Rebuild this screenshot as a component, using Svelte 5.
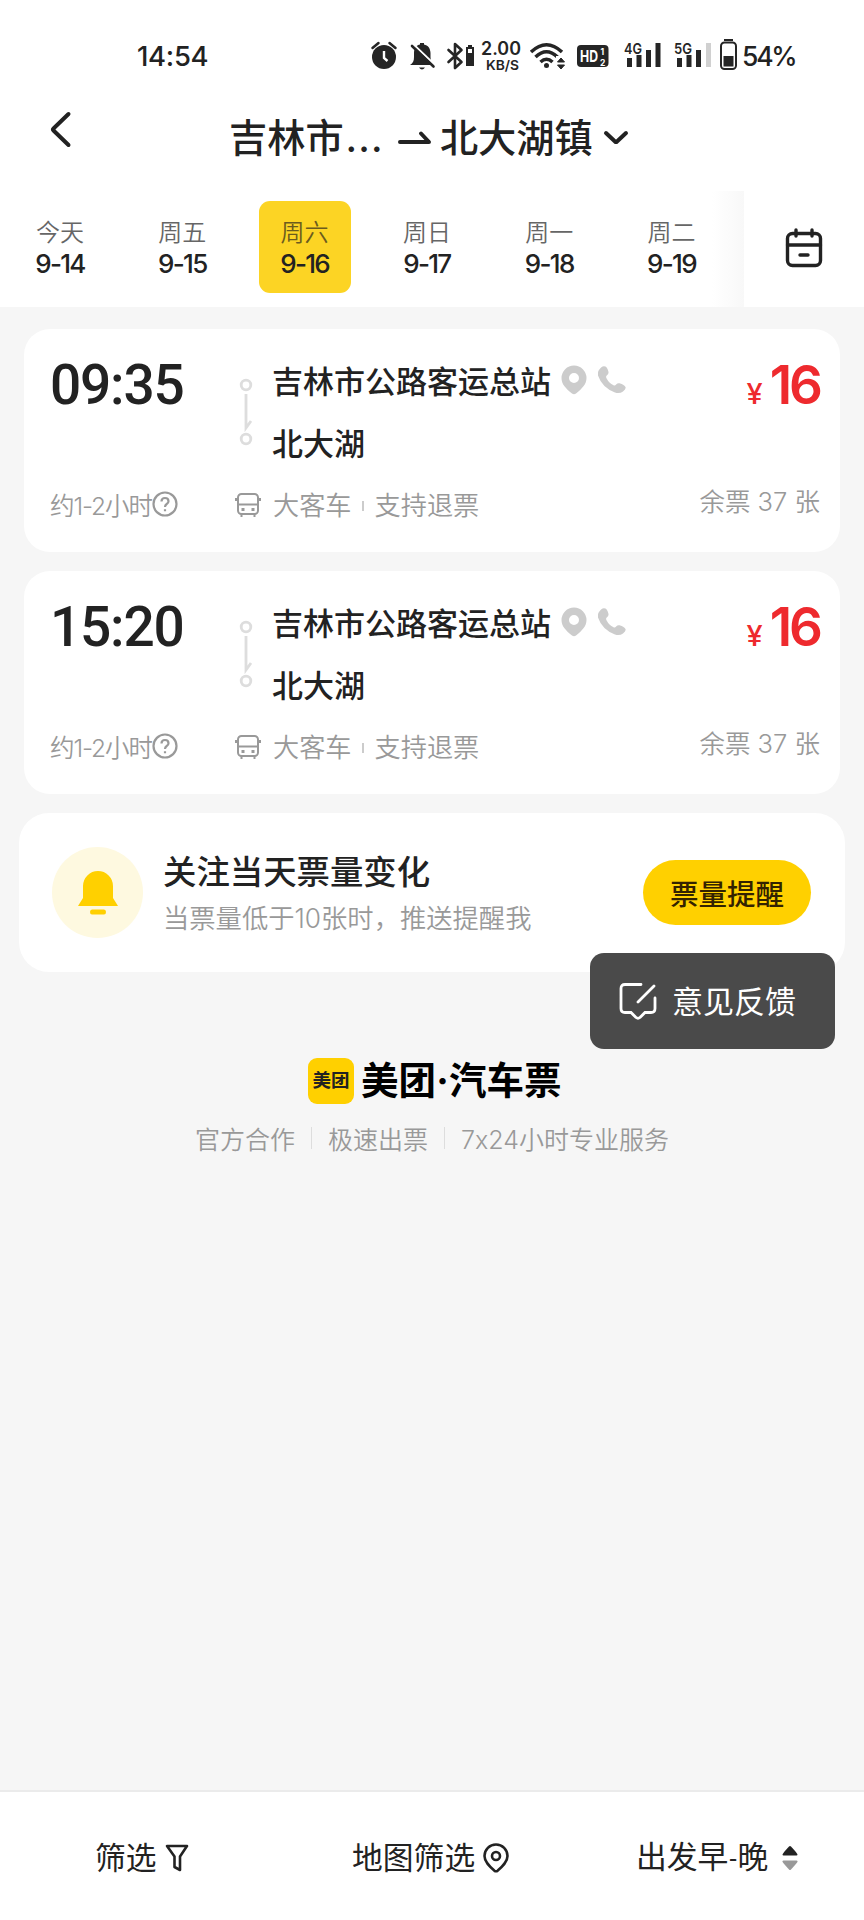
<script>
    let days = [
        { week: '今天', date: '9-14' },
        { week: '周五', date: '9-15' },
        { week: '周六', date: '9-16' },
        { week: '周日', date: '9-17' },
        { week: '周一', date: '9-18' },
        { week: '周二', date: '9-19' }
    ];
    let selected = '9-16';

    let trips = [
        { time: '09:35', from: '吉林市公路客运总站', to: '北大湖', price: 16, left: 37 },
        { time: '15:20', from: '吉林市公路客运总站', to: '北大湖', price: 16, left: 37 }
    ];
</script>

<div class="page">
    <header>
        <!-- Status bar -->
        <div class="status">
            <span class="clock">14:54</span>
            <svg class="status-icons" width="372" height="40" viewBox="370 36 372 40" fill="#252525">
                <!-- alarm -->
                <circle cx="384" cy="57" r="12" />
                <path d="M372.500 48l6-5M395.500 48l-6-5" stroke="#252525" stroke-width="2.500" stroke-linecap="round" />
                <path d="M384 51v7l3.500 3" fill="none" stroke="#fff" stroke-width="2.400" />
                <!-- muted bell -->
                <path d="M410 65c3-2 4-4 4-8v-4c0-5 3-8 6-8.500v-1.500h4v1.500c4 .8 6.500 4 6.500 8.500v4c0 4 1 6 4 8zM419 67.500h6q-3 4-6 0z" />
                <path d="M413.500 44.500l22 21" stroke="#fff" stroke-width="2.200" />
                <path d="M412 46l21.500 20.500" stroke="#252525" stroke-width="2.600" stroke-linecap="round" />
                <!-- bluetooth -->
                <path d="M448.500 50l13 12-6.500 6V44l6.500 6-13 12" fill="none" stroke="#252525" stroke-width="2.600" stroke-linejoin="round" stroke-linecap="round" />
                <path d="M468 45h4v2h2v19h-8V47h2z" />
                <path d="M468 49h4v4h-4z" fill="#fff" />
                <text x="481" y="54.500" font-size="18.500" font-weight="600" textLength="40" lengthAdjust="spacingAndGlyphs">2.00</text>
                <text x="486" y="69.500" font-size="13.500" font-weight="600" textLength="33" lengthAdjust="spacingAndGlyphs">KB/S</text>
                <!-- wifi -->
                <g fill="none" stroke="#252525" stroke-width="3.500">
                    <path d="M531 52q15.500-14.500 31 0" />
                    <path d="M535.500 57q11-10.500 22 0" />
                    <path d="M540.500 62q6-5.500 12 0" />
                </g>
                <circle cx="546.500" cy="65.500" r="2.500" />
                <path d="M556 56h10v14h-10z" fill="#fff" />
                <path d="M557.500 62l3.500-4 3.500 4zM557.500 65h7l-3.500 4z" stroke="#252525" stroke-width="1" />
                <!-- hd -->
                <rect x="577" y="45" width="31.500" height="22" rx="4" />
                <g fill="#fff" font-weight="700">
                    <text x="580" y="62" font-size="16.500" textLength="18" lengthAdjust="spacingAndGlyphs">HD</text>
                    <text x="600.500" y="54.500" font-size="8.500">1</text>
                    <text x="600" y="65.500" font-size="8.500">2</text>
                </g>
                <!-- signals -->
                <path d="M627 58h5v9h-5zM636.500 55h5v12h-5zM646 50h5v17h-5zM655.500 43h5v24h-5z" />
                <text class="net" x="624" y="53.500" font-size="15" font-weight="600" textLength="18" lengthAdjust="spacingAndGlyphs">4G</text>
                <path d="M677 58h5v9h-5zM686.500 55h5v12h-5zM696 50h5v17h-5z" />
                <path d="M706 43h5v24h-5z" fill="#d0d0d0" />
                <text class="net" x="674" y="53.500" font-size="15" font-weight="600" textLength="18" lengthAdjust="spacingAndGlyphs">5G</text>
                <!-- battery -->
                <path d="M724 39h9v2h-9z" />
                <rect x="721" y="42.500" width="15" height="26.500" rx="3.500" fill="none" stroke="#252525" stroke-width="2" />
                <path d="M723.500 56h10v10.500h-10z" />
            </svg>
            <span class="percent">54%</span>
        </div>

        <div class="title-bar">
            <svg class="back" width="24" height="40" viewBox="0 0 24 40">
                <path d="M19.500 4L4.500 18.500q-1 1 0 2L19.500 35" />
            </svg>
            <div class="route">
                <span>吉林市<i class="dots">...</i></span>
                <svg class="route-arrow" width="34" height="16" viewBox="0 0 34 16">
                    <path d="M2 12h29L23 3.500" />
                </svg>
                <span>北大湖镇</span>
                <svg class="route-more" width="26" height="16" viewBox="0 0 26 16">
                    <path d="M3 3l9 8.500q1 1 2 0L23 3" />
                </svg>
            </div>
        </div>

        <!-- Date picker -->
        <div class="dates">
            <div class="days">
                {#each days as day}
                    <button class="day" class:active={day.date === selected} on:click={() => selected = day.date}>
                        <span class="week">{day.week}</span>
                        <span class="date">{day.date}</span>
                    </button>
                {/each}
            </div>
            <div class="fade"></div>
            <svg class="calendar" width="40" height="42" viewBox="0 0 40 42">
                <rect x="3.500" y="6.500" width="33" height="32" rx="5" />
                <path d="M12 3v6M28 3v6M3.500 18h33M16 28h8" stroke-linecap="round" />
            </svg>
        </div>
    </header>

    <main>
        {#each trips as trip}
            <section class="trip">
                <div class="time">{trip.time}</div>
                <svg class="rail" width="14" height="68" viewBox="0 0 14 68">
                    <circle cx="7" cy="7" r="4.800" />
                    <circle cx="7" cy="61" r="4.800" />
                    <path d="M7 16v34l5-7" />
                </svg>
                <div class="stops">
                    <div class="stop">
                        <span>{trip.from}</span>
                        <svg class="pin" width="26" height="30" viewBox="0 0 26 30">
                            <path fill-rule="evenodd" d="M13 .5a12.500 12.500 0 0 0-12.500 12.500c0 6.500 4.500 10.500 10.500 15.500q2 1.500 4 0c6-5 10.500-9 10.500-15.500A12.500 12.500 0 0 0 13 .5zM13 8a5 5 0 1 1 0 10 5 5 0 0 1 0-10z" />
                        </svg>
                        <svg class="phone" width="28" height="28" viewBox="0 0 28 28">
                            <path d="M1 4q3-5 6.500-3.500 2 1 3 5.500.3 2-1.500 3.200-1.500 1-.5 3 2.500 5 7 7 1.500.8 2.600-.6 1.500-1.800 3.400-1.300 5 1.500 6 3.700.8 2-2.500 4.500-3.500 2.500-8 1Q4 21.500 0 9.500-.5 6 1 4z" />
                        </svg>
                    </div>
                    <div class="stop">{trip.to}</div>
                </div>
                <div class="price"><small>¥</small>{trip.price}</div>

                <div class="duration">
                    <span>约1-2小时</span>
                    <svg width="26" height="26" viewBox="0 0 26 26">
                        <circle cx="13" cy="13" r="11.500" />
                        <path d="M9.500 10.500q0-3.500 3.500-3.500t3.500 3.200q0 1.600-1.800 2.800-1.700 1.200-1.700 3M13 18.300v1.900" />
                    </svg>
                </div>
                <svg class="bus" width="28" height="26" viewBox="0 0 28 26">
                    <rect x="4" y="2" width="20" height="20" rx="3.500" />
                    <path d="M4 12.500h20M2 6v3M26 6v3M2 7h2M24 7h2M7.500 22v3M20.500 22v3" />
                    <path d="M7.500 17.500h3M17.500 17.500h3" stroke-width="3" />
                </svg>
                <div class="tags">
                    <span>大客车</span>
                    <i class="sep"></i>
                    <span>支持退票</span>
                </div>
                <div class="left">余票 {trip.left} 张</div>
            </section>
        {/each}

        <!-- Ticket reminder -->
        <section class="notice">
            <div class="bell">
                <svg width="42" height="46" viewBox="0 0 42 46">
                    <path d="M6 28V16a15 15 0 0 1 30 0v12l5 8H1zM15 39.500h12q2 0 2 2.500t-2 2.500H15q-2 0-2-2.500t2-2.500z" />
                </svg>
            </div>
            <div class="notice-text">
                <h2>关注当天票量变化</h2>
                <p>当票量低于10张时，推送提醒我</p>
            </div>
            <button class="remind">票量提醒</button>
            <button class="feedback">
                <svg width="38" height="38" viewBox="0 0 38 38">
                    <path d="M22 2.500H6Q2 2.500 2 6.500v20q0 4 4 4h6l5 5q2 1.500 4 0l5-5h6q4 0 4-4V16M35 4L19 20" />
                </svg>
                <span>意见反馈</span>
            </button>
        </section>

        <footer>
            <div class="brand">
                <span class="logo">美团</span>
                <span class="name">美团<i>·</i>汽车票</span>
            </div>
            <div class="promises">
                <span>官方合作</span>
                <i></i>
                <span>极速出票</span>
                <i></i>
                <span>7x24小时专业服务</span>
            </div>
        </footer>
    </main>

    <nav>
        <button class="filter">
            筛选
            <svg width="24" height="28" viewBox="0 0 24 28">
                <path d="M2 2h20l-7 10.500V26l-5.500-3V12.500z" />
            </svg>
        </button>
        <button class="map">
            地图筛选
            <svg width="26" height="30" viewBox="0 0 26 30">
                <path d="M13 1.500A11.500 11.500 0 0 0 1.500 13c0 6 5 10.500 10 14.800q1.500 1 3 0c5-4.300 10-8.800 10-14.800A11.500 11.500 0 0 0 13 1.500z" />
                <circle cx="13" cy="13" r="4" />
            </svg>
        </button>
        <button class="sort">
            <span>出发早<i>-</i>晚</span>
            <svg width="16" height="26" viewBox="0 0 16 26">
                <path d="M.5 9.500q0-1 6.500-8 1-1 2 0 6.500 7 6.500 8 0 1-1 1h-13q-1 0-1-1z" fill="#222" />
                <path d="M.5 16.500q0 1 6.500 8 1 1 2 0 6.500-7 6.500-8 0-1-1-1h-13q-1 0-1 1z" fill="#999" />
            </svg>
        </button>
    </nav>
</div>

<style>
:global(body) {
    margin: 0;
    background: #f6f6f6;
}

.page {
    display: flex;
    flex-direction: column;
    width: 864px;
    height: 1920px;
    color: #222;
    font-family: Inter, "Noto Sans CJK SC", sans-serif;
    font-feature-settings: "calt" 0;
    overflow: hidden;
}

button {
    border: none;
    padding: 0;
    background: none;
    color: inherit;
    font-family: inherit;
    cursor: pointer;
}

i {
    font-style: normal;
}

svg {
    display: block;
    flex: none;
}

header {
    height: 307px;
    background: #fff;
}

/* Status bar */
.status {
    display: flex;
    align-items: center;
    height: 40px;
    padding-top: 36px;
    padding-left: 137px;
}

.clock {
    width: 233px;
    font-size: 27.5px;
    font-weight: 500;
    letter-spacing: -0.3px;
}

.percent {
    font-size: 26.5px;
    font-weight: 500;
    letter-spacing: -2.2px;
}

.net {
    paint-order: stroke;
    stroke: #fff;
    stroke-width: 2px;
}

.title-bar {
    display: flex;
    height: 115px;
}

.back {
    margin: 34px 0 0 49px;
}

.back path,
.route path {
    fill: none;
    stroke: #222;
    stroke-width: 4;
    stroke-linecap: round;
    stroke-linejoin: round;
}

.route {
    display: flex;
    align-items: center;
    height: 60px;
    margin: 32px 0 0 156px;
    font-size: 38.2px;
    font-weight: 500;
    line-height: 60px;
    white-space: nowrap;
}

.dots {
    margin-left: 2px;
    letter-spacing: 1.2px;
}

.route-arrow {
    margin: 0 8px 0 14px;
}

.route-more {
    margin-left: 10px;
}

/* Dates */
.dates {
    display: flex;
    height: 116px;
}

.days {
    display: flex;
    gap: 30.3px;
    width: 712px;
    padding: 10px 0 0 14px;
    box-sizing: border-box;
}

.day {
    display: flex;
    flex-direction: column;
    align-items: center;
    width: 92px;
    height: 92px;
    border-radius: 11px;
    flex: none;
}

.day.active {
    background: #fcd424;
}

.week {
    margin-top: 15px;
    font-size: 24px;
    font-weight: 350;
    line-height: 34px;
    color: #666;
}

.date {
    font-size: 26px;
    font-weight: 500;
    line-height: 28px;
    letter-spacing: -1.7px;
}

.active .week {
    color: #6b5b1e;
}

.fade {
    width: 32px;
    background: linear-gradient(to right, #fff, #f8f8f8);
}

.calendar {
    margin: 36px 0 0 40px;
}

.calendar rect,
.calendar path {
    fill: none;
    stroke: #222;
    stroke-width: 3.4;
}

main {
    flex: 1;
    padding-top: 22px;
}

/* Trip cards */
.trip {
    display: grid;
    grid-template-columns: 184px 38px 1fr auto;
    grid-template-rows: 135px 34px;
    height: 223px;
    margin: 0 24px 19.2px;
    padding: 24px 20px 0 26px;
    border-radius: 26px;
    background: #fff;
    box-sizing: border-box;
}

.time {
    font-family: Roboto, sans-serif;
    font-size: 55px;
    font-weight: 500;
    line-height: 65px;
    letter-spacing: -1.2px;
}

.rail {
    margin: 25px 0 0 5px;
}

.rail circle,
.rail path {
    fill: none;
    stroke: #ddd;
    stroke-width: 2.8;
}

.stops {
    margin-top: -5px;
}

.stop {
    display: flex;
    align-items: center;
    height: 62px;
    font-size: 31px;
    font-weight: 500;
    white-space: nowrap;
}

.pin {
    margin: 2px 0 0 10px;
    fill: #ccc;
}

.phone {
    margin: 2px 0 0 11px;
    fill: #ccc;
}

.price {
    color: #ee2a2e;
    font-family: Inter, sans-serif;
    font-size: 53px;
    font-weight: 600;
    line-height: 64px;
    letter-spacing: -3px;
    text-align: right;
}

.price small {
    margin-right: 10px;
    font-size: 29px;
    font-weight: 500;
}

.duration,
.tags {
    display: flex;
    align-items: center;
    color: #999;
    font-size: 24.5px;
    font-weight: 350;
    white-space: nowrap;
}

.duration {
    height: 32px;
    letter-spacing: -1.1px;
}

.duration circle,
.duration path {
    fill: none;
    stroke: #999;
    stroke-width: 2.2;
}

.bus {
    margin-top: 4px;
    fill: none;
    stroke: #999;
    stroke-width: 2;
}

.tags {
    height: 32px;
    margin-left: 1px;
    font-size: 26.2px;
}

.sep {
    width: 2px;
    height: 10px;
    margin: 4px 11px 0 10px;
    background: #ccc;
}

.left {
    color: #999;
    font-size: 25.5px;
    font-weight: 350;
    line-height: 28px;
    white-space: nowrap;
}

/* Reminder */
.notice {
    position: relative;
    display: flex;
    width: 826px;
    height: 159px;
    margin-left: 19px;
    border-radius: 30px;
    background: #fff;
}

.bell {
    display: flex;
    justify-content: center;
    align-items: center;
    width: 91px;
    height: 91px;
    margin: 34px 20px 0 33px;
    border-radius: 50%;
    background: #fef9e0;
}

.bell path {
    fill: #ffd000;
}

.notice-text {
    flex: 1;
    white-space: nowrap;
}

h2 {
    margin: 34px 0 0;
    font-size: 33.4px;
    font-weight: 500;
    line-height: 50px;
}

p {
    margin: 3px 0 0;
    color: #999;
    font-size: 26.3px;
    font-weight: 350;
    line-height: 38px;
}

.remind {
    width: 168px;
    height: 65px;
    margin: 47px 34px 0 0;
    border-radius: 33px;
    background: #ffd000;
    color: #332200;
    font-size: 28.5px;
    font-weight: 500;
}

.feedback {
    position: absolute;
    top: 140px;
    right: 10px;
    display: flex;
    align-items: center;
    gap: 15px;
    width: 245px;
    height: 96px;
    padding-left: 29px;
    border-radius: 14px;
    background: #4a4a4a;
    color: #fff;
    font-size: 31px;
}

.feedback span {
    margin-top: -3px;
}

.feedback path {
    fill: none;
    stroke: #fff;
    stroke-width: 2.8;
    stroke-linecap: round;
}

/* Brand */
footer {
    padding-top: 86px;
}

.brand {
    display: flex;
    align-items: center;
    height: 46px;
    margin-left: 308px;
    color: #000;
}

.logo {
    width: 46px;
    height: 46px;
    border-radius: 9px;
    background: #ffd000;
    color: #222;
    font-size: 18.5px;
    font-weight: 700;
    line-height: 45px;
    text-align: center;
}

.name {
    display: flex;
    margin-left: 7px;
    font-size: 37.5px;
    font-weight: 700;
    line-height: 46px;
}

.name i {
    width: 13px;
    text-align: center;
}

.promises {
    display: flex;
    justify-content: center;
    align-items: center;
    height: 40px;
    margin-top: 14px;
    color: #999;
    font-size: 25px;
    font-weight: 350;
}

.promises i {
    width: 1px;
    height: 22px;
    margin: 0 16px;
    background: #ddd;
}

/* Bottom filters */
nav {
    display: flex;
    height: 130px;
    background: #fff;
    border-top: 2px solid #ebebeb;
    box-sizing: border-box;
}

nav button {
    display: flex;
    align-items: center;
    height: 131px;
    font-size: 30.8px;
    line-height: 40px;
    white-space: nowrap;
}

.filter {
    width: 257px;
    margin-left: 95px;
}

.map {
    width: 284px;
}

nav svg {
    margin-left: 8px;
}

.filter path,
.map path,
.map circle {
    fill: none;
    stroke: #222;
    stroke-width: 2.6;
    stroke-linejoin: round;
}

.sort i {
    margin: 0 1px;
    font-family: Roboto, sans-serif;
    font-size: 26px;
}

.sort svg {
    margin-left: 14px;
}
</style>
